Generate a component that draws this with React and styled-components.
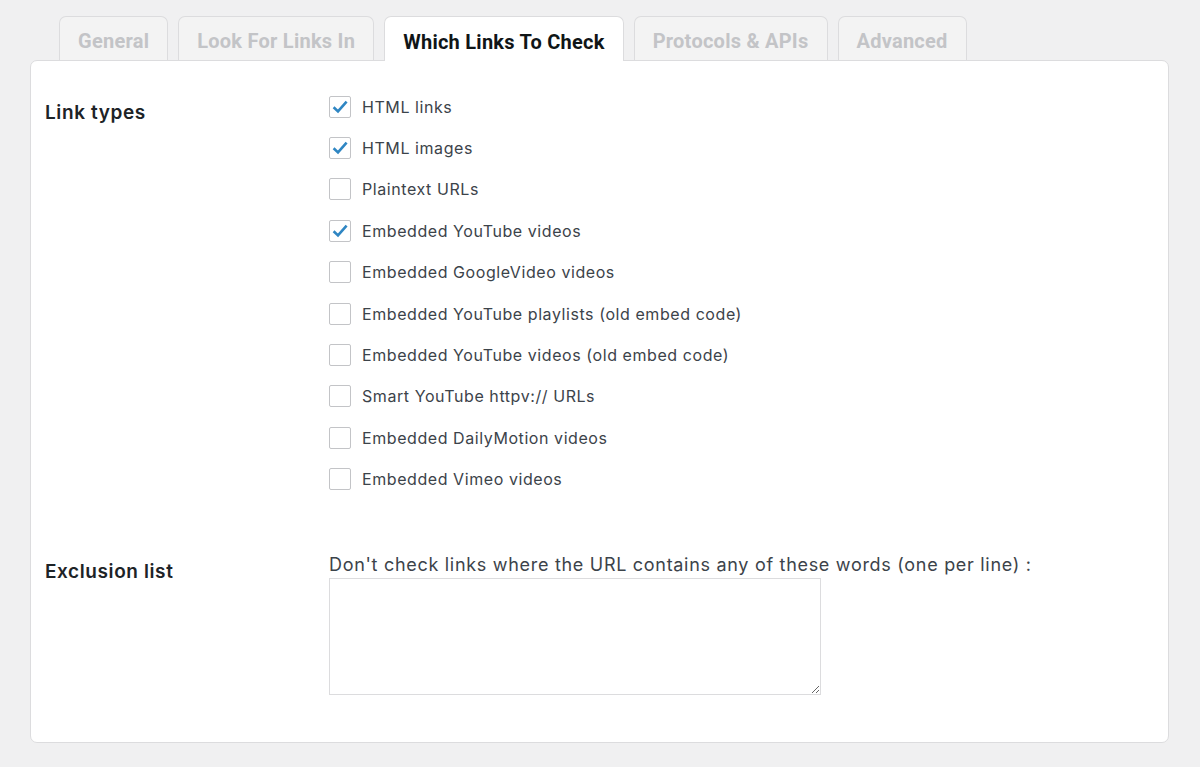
import React from 'react'
import styled, { createGlobalStyle, css } from 'styled-components'

const GlobalStyle = createGlobalStyle`
  html, body {
    margin: 0;
    background: #f0f0f1;
  }
  body {
    font-family: Inter, "Noto Sans", "Liberation Sans", sans-serif;
  }
`

const Page = styled.div`
  padding: 16px 31px 0 30px;
`

const TabBar = styled.div`
  display: flex;
  gap: 10px;
  padding-left: 29px;
  position: relative;
  z-index: 1;
`

const Tab = styled.div`
  height: 44px;
  box-sizing: border-box;
  padding: 5px 18px 0;
  display: flex;
  align-items: center;
  justify-content: center;
  font-family: Roboto, "Liberation Sans", sans-serif;
  font-weight: 700;
  font-size: 20px;
  letter-spacing: 0.25px;
  color: #c3c4c7;
  background: #f3f3f3;
  border: 1px solid #dcdcde;
  border-bottom: none;
  border-radius: 7px 7px 0 0;

  ${props => props.active && css`
    background: #fff;
    color: #101517;
    height: 45px;
    margin-bottom: -1px;
  `}
`

const Panel = styled.div`
  background: #fff;
  border: 1px solid #dcdcde;
  border-radius: 7px;
  padding: 25px 15px 47px 14px;
`

const Row = styled.div`
  display: grid;
  grid-template-columns: 284px 1fr;
  margin-top: ${props => props.gap || 0}px;
`

const RowLabel = styled.div`
  font-size: 19px;
  font-weight: 600;
  line-height: 24px;
  letter-spacing: 0.6px;
  color: #1d2327;
  margin-top: ${props => props.offset || 0}px;
`

const CheckList = styled.div`
  display: flex;
  flex-direction: column;
`

const CheckItem = styled.label`
  height: 41.4px;
  display: flex;
  align-items: center;
  gap: 11px;
  font-size: 16px;
  color: #3c434a;
  letter-spacing: 0.57px;
`

const Box = styled.span`
  width: 22px;
  height: 22px;
  box-sizing: border-box;
  border: 1px solid #c3c4c7;
  border-radius: 2px;
  background: #fff;
  display: flex;
  align-items: center;
  justify-content: center;
  flex-shrink: 0;
`

const Description = styled.div`
  font-size: 18px;
  line-height: 24px;
  letter-spacing: 0.7px;
  color: #3c434a;
`

const TextBox = styled.textarea`
  display: block;
  margin-top: 1px;
  width: 492px;
  height: 117px;
  box-sizing: border-box;
  border: 1px solid #dcdcde;
  border-radius: 0;
  outline: none;
  font-family: inherit;
`

const Check = () => (
  <svg width="18" height="18" viewBox="0 0 18 18">
    <path d="M2.6 9.2 L7 13.4 L15.6 3.6" fill="none" stroke="#2f86c3" strokeWidth="2.6" strokeLinejoin="miter" strokeLinecap="butt" />
  </svg>
)

const tabs = ['General', 'Look For Links In', 'Which Links To Check', 'Protocols & APIs', 'Advanced']

const linkTypes = [
  ['HTML links', true],
  ['HTML images', true],
  ['Plaintext URLs', false],
  ['Embedded YouTube videos', true],
  ['Embedded GoogleVideo videos', false],
  ['Embedded YouTube playlists (old embed code)', false],
  ['Embedded YouTube videos (old embed code)', false],
  ['Smart YouTube httpv:// URLs', false],
  ['Embedded DailyMotion videos', false],
  ['Embedded Vimeo videos', false],
]

export default function App() {
  return (
    <Page>
      <GlobalStyle />
      <TabBar>
        {tabs.map(t => (
          <Tab key={t} active={t === 'Which Links To Check'}>{t}</Tab>
        ))}
      </TabBar>
      <Panel>
        <Row>
          <RowLabel offset={15}>Link types</RowLabel>
          <CheckList>
            {linkTypes.map(([name, on]) => (
              <CheckItem key={name}>
                <Box>{on && <Check />}</Box>
                {name}
              </CheckItem>
            ))}
          </CheckList>
        </Row>
        <Row gap={53}>
          <RowLabel offset={7}>Exclusion list</RowLabel>
          <div>
            <Description>Don't check links where the URL contains any of these words (one per line) :</Description>
            <TextBox />
          </div>
        </Row>
      </Panel>
    </Page>
  )
}
